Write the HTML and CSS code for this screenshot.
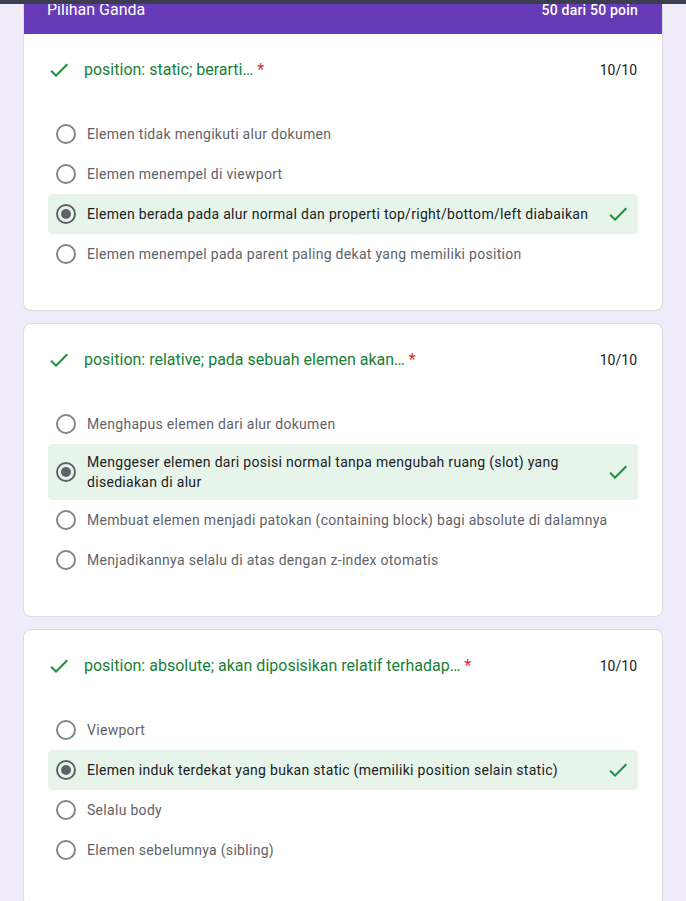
FILE: index.html
```html
<!DOCTYPE html>
<html lang="id">
<head>
<meta charset="utf-8">
<title>Pilihan Ganda</title>
<link rel="stylesheet" href="styles.css">
</head>
<body>
<div class="topbar"></div>
<main class="page">
  <section class="card">
    <div class="card-head">
      <span class="head-title">Pilihan Ganda</span>
      <span class="head-score">50 dari 50 poin</span>
    </div>
    <div class="question">
      <div class="q-row">
        <svg class="check q-check" viewBox="0 0 24 24"><path d="M9 16.17L4.83 12l-1.42 1.41L9 19 21 7l-1.41-1.41z"/></svg>
        <div class="q-title">position: static; berarti… <span class="req">*</span></div>
        <div class="q-points">10/10</div>
      </div>
      <div class="options">
        <div class="opt"><span class="radio"></span><span class="opt-text">Elemen tidak mengikuti alur dokumen</span></div>
        <div class="opt"><span class="radio"></span><span class="opt-text">Elemen menempel di viewport</span></div>
        <div class="opt opt-correct"><span class="radio radio-on"></span><span class="opt-text">Elemen berada pada alur normal dan properti top/right/bottom/left diabaikan</span><svg class="check opt-check" viewBox="0 0 24 24"><path d="M9 16.17L4.83 12l-1.42 1.41L9 19 21 7l-1.41-1.41z"/></svg></div>
        <div class="opt"><span class="radio"></span><span class="opt-text">Elemen menempel pada parent paling dekat yang memiliki position</span></div>
      </div>
    </div>
  </section>

  <section class="card">
    <div class="question">
      <div class="q-row">
        <svg class="check q-check" viewBox="0 0 24 24"><path d="M9 16.17L4.83 12l-1.42 1.41L9 19 21 7l-1.41-1.41z"/></svg>
        <div class="q-title">position: relative; pada sebuah elemen akan… <span class="req">*</span></div>
        <div class="q-points">10/10</div>
      </div>
      <div class="options">
        <div class="opt"><span class="radio"></span><span class="opt-text">Menghapus elemen dari alur dokumen</span></div>
        <div class="opt opt-correct"><span class="radio radio-on"></span><span class="opt-text">Menggeser elemen dari posisi normal tanpa mengubah ruang (slot) yang disediakan di alur</span><svg class="check opt-check" viewBox="0 0 24 24"><path d="M9 16.17L4.83 12l-1.42 1.41L9 19 21 7l-1.41-1.41z"/></svg></div>
        <div class="opt"><span class="radio"></span><span class="opt-text">Membuat elemen menjadi patokan (containing block) bagi absolute di dalamnya</span></div>
        <div class="opt"><span class="radio"></span><span class="opt-text">Menjadikannya selalu di atas dengan z-index otomatis</span></div>
      </div>
    </div>
  </section>

  <section class="card">
    <div class="question">
      <div class="q-row">
        <svg class="check q-check" viewBox="0 0 24 24"><path d="M9 16.17L4.83 12l-1.42 1.41L9 19 21 7l-1.41-1.41z"/></svg>
        <div class="q-title">position: absolute; akan diposisikan relatif terhadap… <span class="req">*</span></div>
        <div class="q-points">10/10</div>
      </div>
      <div class="options">
        <div class="opt"><span class="radio"></span><span class="opt-text">Viewport</span></div>
        <div class="opt opt-correct"><span class="radio radio-on"></span><span class="opt-text">Elemen induk terdekat yang bukan static (memiliki position selain static)</span><svg class="check opt-check" viewBox="0 0 24 24"><path d="M9 16.17L4.83 12l-1.42 1.41L9 19 21 7l-1.41-1.41z"/></svg></div>
        <div class="opt"><span class="radio"></span><span class="opt-text">Selalu body</span></div>
        <div class="opt"><span class="radio"></span><span class="opt-text">Elemen sebelumnya (sibling)</span></div>
      </div>
    </div>
  </section>
</main>
</body>
</html>
```

FILE: styles.css
```css
* { box-sizing: border-box; }

html, body {
  margin: 0;
  padding: 0;
}

body {
  background: #f0ebf8;
  font-family: Roboto, "Noto Sans", Arial, sans-serif;
  color: #202124;
  overflow: hidden;
}

.topbar {
  position: fixed;
  top: 0;
  left: 0;
  right: 0;
  height: 4px;
  background: #3c3e4f;
  z-index: 10;
}

.page {
  width: 640px;
  margin: 0 auto;
  display: flex;
  flex-direction: column;
  gap: 12px;
}

.card {
  background: #fff;
  border: 1px solid #dadce0;
  border-radius: 8px;
  overflow: hidden;
}

.card:first-child {
  margin-top: -14px;
  border-top: 0;
}

.card-head {
  background: #673ab7;
  color: #fff;
  display: flex;
  justify-content: space-between;
  align-items: center;
  padding: 12px 24px 12px 23px;
  line-height: 24px;
}

.head-title {
  font-size: 16px;
}

.head-score {
  font-size: 14px;
  font-weight: 500;
  letter-spacing: 0.2px;
}

.question {
  padding: 24px 24px 36px 23px;
}

.q-row {
  display: flex;
  align-items: center;
  height: 24px;
}

.check {
  width: 24px;
  height: 24px;
  fill: #1e8e3e;
  flex: none;
}

.q-check {
  margin-right: 13px;
}

.q-title {
  flex: 1;
  font-size: 16px;
  line-height: 24px;
  color: #188038;
}

.req {
  color: #d93025;
}

.q-points {
  font-size: 14px;
  color: #202124;
  padding-right: 1px;
}

.options {
  margin-top: 32px;
  margin-left: 1px;
  display: flex;
  flex-direction: column;
}

.opt {
  display: flex;
  align-items: center;
  min-height: 40px;
  padding: 8px 8px 8px 8px;
  border-radius: 4px;
}

.opt-correct {
  background: #e6f4ea;
}

.radio {
  width: 20px;
  height: 20px;
  border: 2px solid #80868b;
  border-radius: 50%;
  flex: none;
  display: flex;
  align-items: center;
  justify-content: center;
  margin-right: 11px;
}

.radio-on {
  border-color: #5f6368;
}

.radio-on::after {
  content: "";
  width: 10px;
  height: 10px;
  border-radius: 50%;
  background: #5f6368;
}

.opt-text {
  flex: 1;
  font-size: 14px;
  line-height: 20px;
  letter-spacing: 0.3px;
  color: #5f6368;
}

.opt-correct .opt-text {
  color: #202124;
}

.opt-check {
  margin-left: 12px;
}
```
